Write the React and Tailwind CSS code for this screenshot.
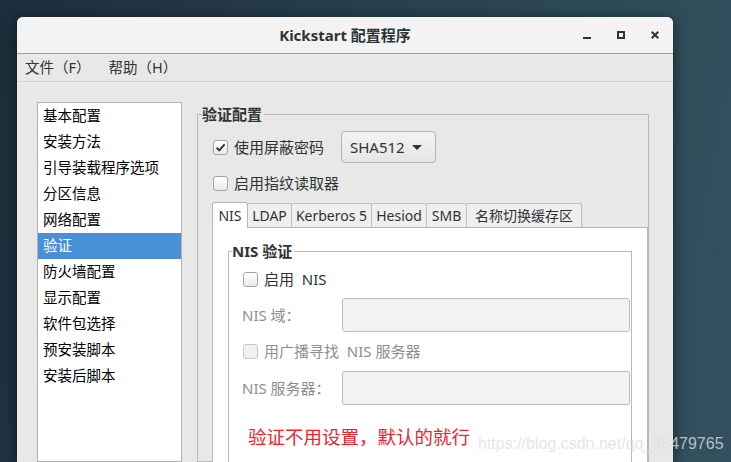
import React from "react";

const sideItems = [
  "基本配置",
  "安装方法",
  "引导装载程序选项",
  "分区信息",
  "网络配置",
  "验证",
  "防火墙配置",
  "显示配置",
  "软件包选择",
  "预安装脚本",
  "安装后脚本",
];

const tabs = [
  { label: "NIS", w: "w-[36px]" },
  { label: "LDAP", w: "w-[44px]" },
  { label: "Kerberos 5", w: "w-[80px]" },
  { label: "Hesiod", w: "w-[55px]" },
  { label: "SMB", w: "w-[40px]" },
  { label: "名称切换缓存区", w: "w-[115px]" },
];

function CheckBox({ checked, disabled }) {
  return (
    <span
      className={
        disabled
          ? "w-[15px] h-[15px] rounded-[3px] border border-[#c8c8c8] bg-[#f1f1f0] flex items-center justify-center shrink-0"
          : "w-[15px] h-[15px] rounded-[3px] border border-[#a4a4a4] bg-[linear-gradient(#ffffff,#eaeaea)] flex items-center justify-center shrink-0"
      }
    >
      {checked && (
        <svg width="11" height="11" viewBox="0 0 11 11">
          <path d="M1.6 5.6 L4.3 8.3 L9.6 2.4" fill="none" stroke="#2e3436" strokeWidth="2" />
        </svg>
      )}
    </span>
  );
}

function WindowControls() {
  return (
    <div className="flex justify-end items-center gap-[26px] pr-[14px]">
      <svg width="8" height="8" viewBox="0 0 8 8">
        <rect x="0" y="6" width="8" height="2" fill="#2e3436" />
      </svg>
      <svg width="8" height="8" viewBox="0 0 8 8">
        <rect x="1" y="1" width="6" height="6" fill="none" stroke="#2e3436" strokeWidth="2" />
      </svg>
      <svg width="8" height="8" viewBox="0 0 8 8">
        <path d="M0.7 0.7 L7.3 7.3 M7.3 0.7 L0.7 7.3" stroke="#2e3436" strokeWidth="2" />
      </svg>
    </div>
  );
}

export default function App() {
  return (
    <div className="w-[731px] h-[462px] overflow-hidden relative bg-[linear-gradient(100deg,#1c2e3b_0%,#27404d_45%,#2d4b56_75%,#34505f_100%)] pl-[17px] pt-[17px] font-['Noto_Sans','Noto_Sans_CJK_SC',sans-serif] text-[#2e3436]">
      {/* window */}
      <div className="w-[656px] h-[445px] rounded-t-[6px] bg-[#e8e8e7] shadow-[0_2px_14px_rgba(0,0,0,0.55)] flex flex-col overflow-hidden">
        {/* title bar */}
        <div className="h-[37px] shrink-0 bg-[#f3f3f3] border-b border-[#9d9d9d] grid grid-cols-[1fr_auto_1fr] items-center">
          <div />
          <div className="font-bold text-[15px] leading-[20px]">Kickstart 配置程序</div>
          <WindowControls />
        </div>

        {/* menu bar */}
        <div className="h-[28px] shrink-0 border-b border-[#d3d3d2] flex items-center pl-[8px] gap-[18px] text-[14.5px]">
          <span>文件（F）</span>
          <span>帮助（H）</span>
        </div>

        {/* body */}
        <div className="flex flex-1 min-h-0 pl-[20px] pt-[20px] gap-[15px]">
          {/* sidebar */}
          <div className="w-[145px] shrink-0 bg-white border border-[#b3b3b3] flex flex-col text-[14.5px]">
            {sideItems.map((item, i) => (
              <div
                key={item}
                className={
                  i === 5
                    ? "h-[26px] shrink-0 flex items-center pl-[5px] bg-[#4a90d9] text-white"
                    : "h-[26px] shrink-0 flex items-center pl-[5px] text-black"
                }
              >
                {item}
              </div>
            ))}
          </div>

          {/* 验证配置 frame */}
          <fieldset className="w-[452px] shrink-0 mt-[2px] border border-[#b9b9b9] pl-[14px] pr-0 pb-0 min-w-0 text-[15px]">
            <legend className="-ml-[10px] pr-[2px] font-bold leading-[20px] h-[20px]">验证配置</legend>

            <div className="mt-[7px] h-[32px] flex items-center">
              <span className="ml-[1px]">
                <CheckBox checked />
              </span>
              <span className="ml-[6px]">使用屏蔽密码</span>
              <div className="ml-[17px] w-[95px] h-[32px] rounded-[4px] border border-[#b5b5b5] bg-[linear-gradient(#f3f3f3,#e6e6e6)] flex items-center justify-between pl-[8px] pr-[13px]">
                <span>SHA512</span>
                <svg width="10" height="5" viewBox="0 0 10 5">
                  <path d="M0 0 L10 0 L5 5 Z" fill="#2e3436" />
                </svg>
              </div>
            </div>

            <div className="mt-[10px] h-[20px] flex items-center">
              <span className="ml-[1px]">
                <CheckBox />
              </span>
              <span className="ml-[6px]">启用指纹读取器</span>
            </div>

            {/* tabs */}
            <div className="mt-[9px] h-[25px] flex items-end text-[14px]">
              {tabs.map((t, i) =>
                i === 0 ? (
                  <div
                    key={t.label}
                    className={`${t.w} h-[26px] -mb-[1px] relative z-10 bg-white border border-b-0 border-[#b6b6b6] rounded-t-[3px] flex items-center justify-center`}
                  >
                    {t.label}
                  </div>
                ) : (
                  <div
                    key={t.label}
                    className={`${t.w} h-[24px] bg-[#efefee] border border-l-0 border-b-0 border-[#bdbdbd] rounded-tr-[3px] flex items-center justify-center whitespace-nowrap`}
                  >
                    {t.label}
                  </div>
                )
              )}
            </div>

            {/* tab panel */}
            <div className="h-[240px] bg-white border border-[#b6b6b6] pl-[15px] pr-[15px] pt-[13px]">
              <fieldset className="h-[260px] border border-[#b9b9b9] pl-[13px] pr-[1px] min-w-0">
                <legend className="-ml-[10px] pr-[2px] font-bold leading-[20px] h-[20px]">NIS 验证</legend>

                <div className="mt-[8px] h-[20px] flex items-center">
                  <span className="ml-[1px]">
                    <CheckBox />
                  </span>
                  <span className="ml-[6px]">启用&nbsp;&nbsp;NIS</span>
                </div>

                <div className="mt-[9px] flex items-center text-[#8d8f8f]">
                  <span className="w-[100px]">NIS 域：</span>
                  <div className="flex-1 h-[34px] rounded-[3px] border border-[#bcbcbc] bg-[#f2f2f1]" />
                </div>

                <div className="mt-[9px] h-[20px] flex items-center text-[#8d8f8f]">
                  <span className="ml-[1px]">
                    <CheckBox disabled />
                  </span>
                  <span className="ml-[6px]">用广播寻找&nbsp;&nbsp;NIS 服务器</span>
                </div>

                <div className="mt-[10px] flex items-center text-[#8d8f8f]">
                  <span className="w-[100px]">NIS 服务器：</span>
                  <div className="flex-1 h-[34px] rounded-[3px] border border-[#bcbcbc] bg-[#f2f2f1]" />
                </div>

                <div className="mt-[20px] ml-[6px] text-[18.5px] leading-[24px] text-[#f0222c]">
                  验证不用设置，默认的就行
                </div>
              </fieldset>
            </div>
          </fieldset>
        </div>
      </div>

      {/* watermark */}
      <div className="absolute left-[478px] top-[434px] font-['Liberation_Sans',Arial,sans-serif] text-[16px] leading-[20px] text-[rgba(222,222,222,0.8)]">
        https://blog.csdn.net/qq_35479765
      </div>
    </div>
  );
}
